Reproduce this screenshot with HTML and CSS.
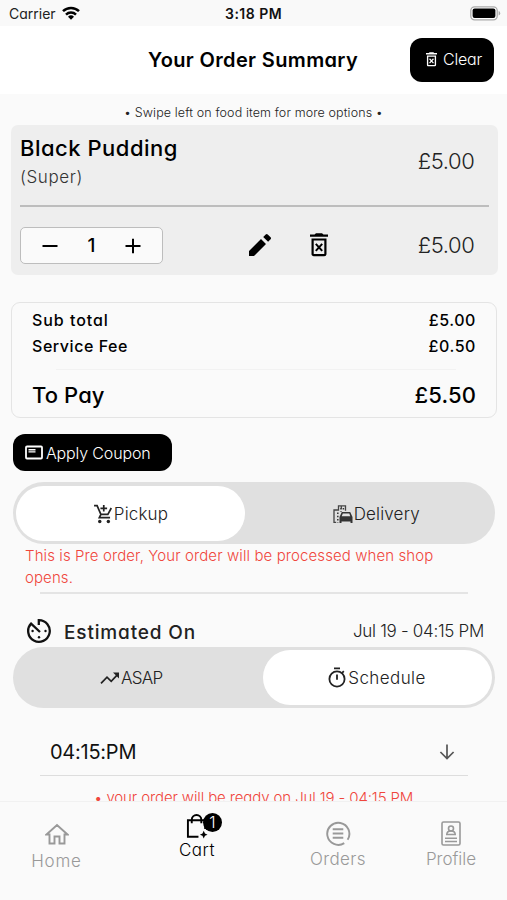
FILE: index.html
```html
<!DOCTYPE html>
<html lang="en">
<head>
<meta charset="utf-8">
<title>Your Order Summary</title>
<link rel="stylesheet" href="styles.css">
</head>
<body>
<svg class="defs" aria-hidden="true">
  <symbol id="trash" viewBox="0 0 18 24"><path fill="none" stroke="currentColor" stroke-width="2.2" d="M2.600 6.500h12.800v14.400q0 1.200-1.200 1.200H3.800q-1.200 0-1.200-1.200z"/><path fill="none" stroke="currentColor" stroke-width="2" d="M5.800 10.800l6.400 7M12.200 10.800l-6.400 7"/><path fill="currentColor" d="M0 1.500h4.500L6 .3h6l1.500 1.200H18v2.300H0z"/></symbol>
</svg>
<div class="status">
  <span class="carrier">Carrier</span>
  <svg class="wifi" viewBox="0 0 18 14"><path fill="none" stroke="#000" stroke-width="2.5" d="M1 5.2a11.5 11.5 0 0 1 16 0M4 8.6a7.2 7.2 0 0 1 10 0"/><path d="M6 10.7a4.3 4.3 0 0 1 6 0L9 13.8z"/></svg>
  <span class="clock">3:18 PM</span>
  <svg class="battery" viewBox="0 0 31 15"><rect x=".8" y=".8" width="26.4" height="13" rx="3.8" fill="#fff" stroke="#aaa" stroke-width="1.3"/><rect x="2.6" y="2.6" width="22.8" height="9.4" rx="2"/><path d="M28.6 5v4.6q1.6-.6 1.6-2.3T28.6 5z" fill="#aaa"/></svg>
</div>
<header class="header">
  <h1>Your Order Summary</h1>
  <button class="clear"><svg><use href="#trash"/></svg><span>Clear</span></button>
</header>
<main class="content">
  <p class="hint">• Swipe left on food item for more options •</p>
  <section class="item">
    <div class="item-top">
      <div><h2>Black Pudding</h2><p class="variant">(Super)</p></div>
      <span class="price">£5.00</span>
    </div>
    <div class="item-bottom">
      <div class="qty">
        <svg viewBox="0 0 16 16"><path d="M.5 8h15"/></svg><span>1</span><svg viewBox="0 0 16 16"><path d="M.5 8h15M8 .8v14.4"/></svg>
      </div>
      <svg class="pencil" viewBox="0 0 24 24"><path d="M1 18v5h5L18 11l-5-5zM22.600 6.300a1.500 1.500 0 0 0 0-2l-2.900-2.900a1.500 1.500 0 0 0-2 0l-2.500 2.500 4.900 4.900z"/></svg>
      <svg class="trash"><use href="#trash"/></svg>
      <span class="price">£5.00</span>
    </div>
  </section>
  <section class="totals">
    <div class="row"><span class="l1">Sub total</span><span>£5.00</span></div>
    <div class="row"><span>Service Fee</span><span>£0.50</span></div>
    <div class="row pay"><span>To Pay</span><span>£5.50</span></div>
  </section>
  <button class="coupon"><svg viewBox="0 0 18 14"><rect x="1" y="1" width="16" height="12" rx="1" fill="none" stroke="#fff" stroke-width="1.8"/><path stroke="#fff" stroke-width="1.4" d="M3.5 4.2h7M3.5 6.4h7"/></svg><span>Apply Coupon</span></button>
  <div class="toggle">
    <div class="option active pickup">
      <svg viewBox="0 0 20 21"><path fill="none" stroke="#222" stroke-width="1.8" d="M.6 1.8h3.2l4 9h7.3l3.6-6.6M7.8 10.8l-1.7 3.6h11.3M10.8 1v7M7.3 4.5h7"/><circle cx="6.6" cy="18.3" r="1.8" fill="#222"/><circle cx="15.6" cy="18.3" r="1.8" fill="#222"/></svg><span>Pickup</span>
    </div>
    <div class="option delivery">
      <svg viewBox="0 0 20 20"><path fill="none" stroke="#444" stroke-width="1.3" d="M3.2 18.4H1V6h4.5V1.8h7v5M8.3 1.8v3"/><path stroke="#333" stroke-width="1.5" stroke-dasharray="1.5 1.7" d="M4.8 8.5v10M8 4v4M10.4 4v3"/><path fill="#333" d="M8.8 8h8.4l2.3 5v6h-2v-1.5h-9V19h-2v-6z"/><path fill="#e0e0e0" d="M9.8 9.5h6.5l1 2.8H8.7z"/></svg><span>Delivery</span>
    </div>
  </div>
  <p class="notice">This is Pre order, Your order will be processed when shop opens.</p>
  <div class="estimate">
    <svg viewBox="0 0 26 26"><path fill="none" stroke="#111" stroke-width="2.3" d="M12.8 7V2.2A10.8 10.8 0 1 1 5.1 5.6L14 14"/><g fill="#111"><circle cx="6.6" cy="13" r="1.2"/><circle cx="19.5" cy="13" r="1.2"/><circle cx="13" cy="19.2" r="1.2"/></g></svg>
    <strong>Estimated On</strong><span>Jul 19 - 04:15 PM</span>
  </div>
  <div class="toggle when">
    <div class="option asap">
      <svg viewBox="0 0 20 14"><path fill="none" stroke="#222" stroke-width="1.7" d="M1 12.3l6-6.2 4.2 4.2 6.8-7.2"/><path fill="#222" d="M13 1.5h6v6z"/></svg><span>ASAP</span>
    </div>
    <div class="option active schedule">
      <svg viewBox="0 0 18 21"><circle cx="9" cy="12" r="7.6" fill="none" stroke="#222" stroke-width="1.8"/><path stroke="#222" stroke-width="1.8" d="M6 1.3h6M9 7.5v5.3M14.2 5.8l1.6-1.6"/></svg><span>Schedule</span>
    </div>
  </div>
  <div class="select"><span>04:15:PM</span><svg viewBox="0 0 16 16"><path fill="none" stroke="#555" stroke-width="1.7" d="M8 .5v14M1.4 8 8 14.6 14.6 8"/></svg></div>
  <p class="ready">• your order will be ready on Jul 19 - 04:15 PM</p>
</main>
<nav class="tabs">
  <a class="tab home"><svg viewBox="0 0 24 22"><path fill="none" stroke="#999" stroke-width="1.9" d="M1.5 11.5 12 2l10.500 9.500H19.500V20.500H14.500V13.500H9.500V20.500H4.500V11.500z"/></svg><span>Home</span></a>
  <a class="tab cart"><svg viewBox="0 0 24 26"><path fill="none" stroke="#000" stroke-width="2" d="M13 24.300H2V7h18v9M6 10V6.500a5 5 0 0 1 10 0V10"/><path d="M18.500 18l1.300 2.700 2.700 1.300-2.700 1.300-1.300 2.700-1.300-2.700-2.700-1.300 2.700-1.300z"/></svg><b class="badge">1</b><span>Cart</span></a>
  <a class="tab orders"><svg viewBox="0 0 26 26"><g fill="none" stroke="#999" stroke-width="2"><path d="M19.500 23a11.500 11.500 0 1 1 3.500-3.500M7.500 8.500h11M7.500 13h11M7.500 17.500h11"/></g></svg><span>Orders</span></a>
  <a class="tab profile"><svg viewBox="0 0 20 25"><g fill="none" stroke="#999" stroke-width="1.600"><rect x="1" y="1" width="18" height="23" rx="1.500"/><circle cx="10" cy="7.500" r="2.500"/><path d="M5.800 13.500q0-3.500 4.200-3.500t4.200 3.500zM4 17.300h12M4 20.500h12"/></g></svg><span>Profile</span></a>
</nav>
</body>
</html>
```
FILE: styles.css
```css
* { box-sizing: border-box; }
body {
  margin: 0;
  height: 900px;
  overflow: hidden;
  display: flex;
  flex-direction: column;
  background: #fafafa;
  color: #000;
  font-family: Inter, "Open Sans", sans-serif;
  font-feature-settings: "cv11";
  font-weight: 300;
}
h1, h2, p { margin: 0; }
button { border: 0; font: inherit; color: #fff; background: #000; }
svg { display: block; flex: none; }
.defs { display: none; }

.status { flex: none; height: 26px; padding: 1px 6px 0 9px; display: grid; grid-template-columns: 53px 163px 1fr 31px; align-items: center; font-size: 14px; background: #f9f9f9; }
.carrier { font-weight: 400; color: #222; }
.wifi { width: 18px; height: 14px; margin-top: -2px; }
.clock { font-weight: 600; letter-spacing: .5px; color: #111; }
.battery { width: 31px; height: 15px; margin-top: -1px; }

.header { flex: none; height: 68px; padding: 0 13px 0 148px; display: flex; justify-content: space-between; align-items: center; background: #fff; }
h1 { font-size: 20px; font-weight: 600; letter-spacing: .36px; white-space: nowrap; }
.clear { width: 84px; height: 44px; margin-top: -1px; border-radius: 12px; padding: 0 0 0 16px; display: flex; align-items: center; gap: 6px; font-size: 16px; letter-spacing: -.2px; }
.clear svg { width: 11px; height: 15px; }
.clear span { margin-top: -2px; }

.content { flex: none; height: 707px; overflow: hidden; }
.hint { height: 31px; padding-top: 6px; line-height: 26px; font-size: 12.5px; letter-spacing: .12px; text-align: center; color: #222; }

.item { margin: 0 9.5px 0 11px; height: 150px; padding: 0 9px; border-radius: 7px; background: #eee; }
.item-top { height: 82px; border-bottom: 2px solid #bdbdbd; display: flex; justify-content: space-between; padding: 9px 14px 0 0; }
h2 { font-size: 22px; font-weight: 500; line-height: 28px; letter-spacing: .5px; }
.variant { font-size: 17px; line-height: 30px; letter-spacing: .6px; color: #333; }
.price { font-size: 22px; line-height: 54px; letter-spacing: -.4px; color: #222; }
.item-bottom { height: 68px; padding: 8px 14px 0 0; display: flex; align-items: center; }
.item-bottom .price { margin-left: auto; }
.qty { width: 143px; height: 37px; margin: 1px 85px 0 0; padding: 0 21px; border: 1px solid #bdbdbd; border-radius: 5px; background: #fafafa; display: flex; align-items: center; justify-content: space-between; font-size: 19px; font-weight: 500; }
.qty svg { width: 16px; height: 16px; stroke: #000; stroke-width: 2; }
.pencil { width: 24px; height: 24px; }
.trash { width: 18px; height: 24px; margin-left: 38px; }

.totals { margin: 27px 10px 0 11px; height: 116px; padding: 5px 20px 0; border: 1.5px solid #e4e4e4; border-radius: 9px; }
.row { display: flex; justify-content: space-between; height: 25.5px; line-height: 25px; font-size: 16px; font-weight: 500; letter-spacing: .55px; }
.row .l1 { letter-spacing: .95px; }
.pay { margin-top: 10px; padding-top: 4px; height: 48px; line-height: 45px; font-size: 22px; letter-spacing: .1px; background: linear-gradient(#f2f2f2, #f2f2f2) 24px 0 / 400px 1px no-repeat; }

.coupon { width: 159px; height: 37px; margin: 16px 0 0 13px; padding: 0 0 0 12px; border-radius: 12px; display: flex; align-items: center; gap: 3px; font-size: 16px; letter-spacing: -.15px; white-space: nowrap; }
.coupon svg { width: 18px; height: 15px; }

.toggle { margin: 11px 12.5px 0 13px; height: 62px; padding: 4px 3px 3px; border-radius: 31px; background: #e0e0e0; display: grid; grid-template-columns: 229px 1fr; }
.option { display: flex; align-items: center; justify-content: center; gap: 1px; font-size: 17px; letter-spacing: .15px; color: #222; }
.option svg { width: 20px; height: 20px; }
.active { background: #fff; border-radius: 28px; }
.delivery { padding-left: 16px; }
.asap { padding-right: 16px; }
.notice { position: relative; height: 50px; padding: 1px 60px 0 25px; font-size: 15px; line-height: 22px; letter-spacing: .1px; color: #f0463c; }
.notice::after { content: ""; position: absolute; left: 40px; width: 428px; bottom: 0; height: 2px; background: #e4e4e4; }
.estimate { margin: 24px 23px 0 26px; height: 27px; display: flex; align-items: center; font-size: 17px; color: #222; }
.estimate svg { width: 26px; height: 26px; margin-top: -1px; }
.estimate strong { margin: 1px auto 0 12px; font-size: 19px; font-weight: 500; letter-spacing: .85px; }
.estimate span { margin-top: -1px; letter-spacing: -.3px; }
.when { height: 61px; margin-top: 2px; padding: 3px; grid-template-columns: 1fr 229px; }
.asap span { letter-spacing: -.7px; }
.schedule svg { width: 18px; height: 21px; }
.schedule span { letter-spacing: .4px; margin-left: 1px; }
.select { margin: 20px 39px 0 40px; height: 48px; padding: 1px 13px 0 10px; border-bottom: 1.5px solid #ddd; display: flex; align-items: center; justify-content: space-between; font-size: 20px; font-weight: 400; letter-spacing: -.25px; color: #111; }
.select svg { width: 16px; height: 16px; }
.ready { padding-top: 10px; line-height: 24px; margin-left: 94px; font-size: 15px; letter-spacing: -.12px; color: #f0463c; white-space: nowrap; }

.tabs { flex: none; height: 99px; border-top: 1px solid #f1f1f1; display: grid; grid-template-columns: 113px 168px 114px 112px; }
.tab { position: relative; display: flex; flex-direction: column; align-items: center; font-size: 17px; color: #999; }
.tab span { line-height: 22px; }
.home { padding-top: 21px; }
.home svg { width: 24px; height: 22px; margin-bottom: 5px; }
.home span { letter-spacing: .8px; }
.cart { color: #000; padding-top: 11px; }
.cart svg { width: 23px; height: 26px; }
.cart span { letter-spacing: .5px; }
.badge { position: absolute; left: 90px; top: 11px; width: 19px; height: 19px; border-radius: 50%; background: #000; color: #fff; font-size: 16px; font-weight: 300; line-height: 19px; text-align: center; }
.orders { padding-top: 19px; }
.orders svg, .profile svg { width: 26px; height: 25px; margin-bottom: 2px; }
.orders span { letter-spacing: .4px; }
.profile { padding-top: 19px; }
.profile svg { width: 20px; }
```
